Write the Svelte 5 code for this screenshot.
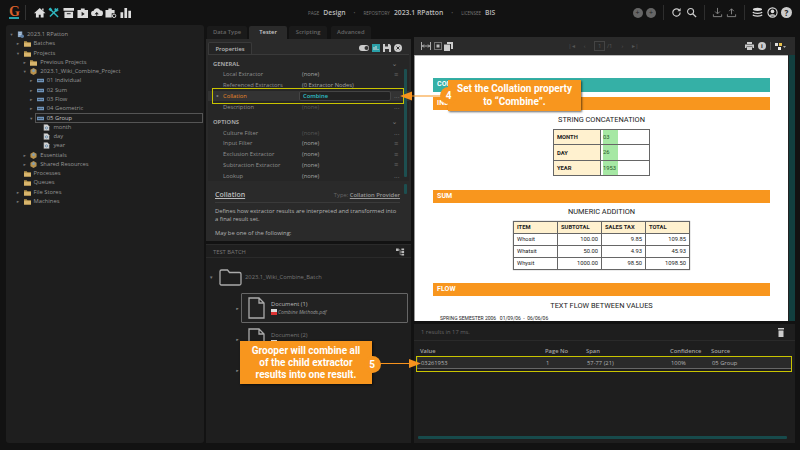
<script>
  const tree = [
    { l: 0, a: 'd', i: 'db', t: '2023.1 RPatton' },
    { l: 1, a: 'r', i: 'folder', t: 'Batches' },
    { l: 1, a: 'd', i: 'folder', t: 'Projects' },
    { l: 2, a: 'r', i: 'folder', t: 'Previous Projects' },
    { l: 2, a: 'd', i: 'proj', t: '2023.1_Wiki_Combine_Project' },
    { l: 3, a: 'r', i: 'ext', t: '01 Individual' },
    { l: 3, a: 'r', i: 'ext', t: '02 Sum' },
    { l: 3, a: 'r', i: 'ext', t: '03 Flow' },
    { l: 3, a: 'r', i: 'ext', t: '04 Geometric' },
    { l: 3, a: 'd', i: 'ext', t: '05 Group', sel: true },
    { l: 4, a: '', i: 'doc', t: 'month' },
    { l: 4, a: '', i: 'doc', t: 'day' },
    { l: 4, a: '', i: 'doc', t: 'year' },
    { l: 2, a: 'r', i: 'proj', t: 'Essentials' },
    { l: 2, a: 'r', i: 'proj', t: 'Shared Resources' },
    { l: 1, a: '', i: 'folder', t: 'Processes' },
    { l: 1, a: '', i: 'folder', t: 'Queues' },
    { l: 1, a: 'r', i: 'folder', t: 'File Stores' },
    { l: 1, a: 'r', i: 'folder', t: 'Machines' }
  ];
  const general = [
    { k: 'Local Extractor', v: '(none)', m: 'list' },
    { k: 'Referenced Extractors', v: '(0 Extractor Nodes)', m: '' },
    { k: 'Collation', v: 'Combine', m: 'dots', active: true },
    { k: 'Description', v: '(none)', m: 'dots', dim: true }
  ];
  const options = [
    { k: 'Culture Filter', v: '(none)', m: 'dots', dim: true },
    { k: 'Input Filter', v: '(none)', m: 'list' },
    { k: 'Exclusion Extractor', v: '(none)', m: 'list' },
    { k: 'Subtraction Extractor', v: '(none)', m: 'list' },
    { k: 'Lookup', v: '(none)', m: 'dots' }
  ];
  const sum = [
    ['Whosit', '100.00', '9.85', '109.85'],
    ['Whatsit', '50.00', '4.93', '45.93'],
    ['Whysit', '1000.00', '98.50', '1098.50']
  ];
</script>

{#snippet treeIcon(kind)}
  {#if kind === 'folder'}
    <svg class="ti" viewBox="0 0 8 7"><path d="M0 1h3l1 1h4v5H0z" fill="#b8964f"/><path d="M0 3h8v4H0z" fill="#d9b66c"/></svg>
  {:else if kind === 'db'}
    <svg class="ti" viewBox="0 0 8 8"><path d="M1 .5h5v6.500H1z" fill="#8aa6c4"/><path d="M2 2h3M2 4h3" stroke="#dfe7ef" stroke-width=".6"/><circle cx="6" cy="6" r="2" fill="#5f7fa3"/></svg>
  {:else if kind === 'proj'}
    <svg class="ti" viewBox="0 0 8 8"><path d="M4 0l3.500 2v4L4 8 .5 6V2z" fill="#b8924e"/><circle cx="4" cy="3" r="1.500" fill="#7fa0b8"/></svg>
  {:else if kind === 'ext'}
    <svg class="ti" viewBox="0 0 8 6"><path d="M0 1h8v4H0z" fill="#6f93b8"/><path d="M1 3h6" stroke="#2a3644" stroke-dasharray="1 .5"/></svg>
  {:else}
    <svg class="ti" viewBox="0 0 7 8"><path d="M.5.5h4l2 2v5h-6z" fill="#d5d5d5" stroke="#8a8a8a" stroke-width=".5"/><circle cx="3.500" cy="4.500" r="1.300" fill="none" stroke="#5f87a8"/></svg>
  {/if}
{/snippet}

{#snippet bigDoc()}
  <svg class="bigdoc" viewBox="0 0 17 22"><path d="M1 1h10l5 5v15H1z M11 1v5h5" fill="none" stroke="#aaa" stroke-width="1.300"/></svg>
{/snippet}

{#snippet propRow(r)}
  <div class="prow" class:dim={r.dim} class:active={r.active}>
    <span class="pk">{r.k}</span>
    <span class="pv">{r.v}</span>
    <span class="pm">
      {#if r.m === 'list'}≡{:else if r.m === 'dots'}...{/if}
    </span>
  </div>
{/snippet}

<div class="app">
  <header class="top">
    <div class="left-h">
      <span class="logo">G</span>
      <span class="sep"></span>
      <svg class="hi" viewBox="0 0 12 12"><path d="M6 1L0 6.500h2V11h3V8h2v3h3V6.500h2zM8.500 1.500H10V4L8.500 3z" fill="#ddd"/></svg>
      <svg class="hi" viewBox="0 0 12 12"><path d="M1.500 1.500l9 9M10.500 1.500l-8.500 8.500" stroke="#2fb7c0" stroke-width="1.500" fill="none"/><path d="M7.500 1a2 2 0 0 0 .5 3.500l1 .5 2.500-1.500-1.500-.2-.5-1z M0.500 2.500l2-2 2 2-2 2z" fill="#2fb7c0"/></svg>
      <svg class="hi" viewBox="0 0 12 12"><path d="M.5 1h11v3H.5zM1.500 5h9v6.500h-9z" fill="#ddd"/><path d="M4 7h4" stroke="#222"/></svg>
      <svg class="hi" viewBox="0 0 12 12"><path d="M.5 3H4V1.500h4V3h3.500v8.500H.5z" fill="#ddd"/><path d="M4.800 5l3.200 2.200-3.200 2.200z" fill="#222"/></svg>
      <svg class="hi" viewBox="0 0 12 12"><path d="M3 9.500a2.800 2.800 0 0 1-.2-5.600 3.500 3.500 0 0 1 6.700-.4A3 3 0 0 1 9.500 9.500z" fill="#ddd"/><path d="M6 10V6M4.300 7.500L6 5.800l1.700 1.700" stroke="#222"/></svg>
      <svg class="hi" viewBox="0 0 12 12"><path d="M.5 3H3.500V1.500h3.500V3h3v3.500H7V11H.5z" fill="#ddd"/><circle cx="9.500" cy="9.200" r="1.800" fill="none" stroke="#ddd"/></svg>
      <svg class="hi" viewBox="0 0 12 12"><path d="M.5 5.500h2.800v6H.5zM4.600 1h2.800v10.500H4.600zM8.700 4h2.800v7.500H8.700z" fill="#ddd"/></svg>
    </div>
    <div class="crumbs">
      <small>PAGE</small><b>Design</b><i>•</i>
      <small>REPOSITORY</small><b>2023.1 RPatton</b><i>•</i>
      <small>LICENSEE</small><b>BIS</b>
    </div>
    <div class="right-h">
      <span class="dot d1">+</span><span class="dot">+</span>
      <span class="sep s2"></span>
      <svg class="hi2" viewBox="0 0 12 12"><path d="M10 6a4 4 0 1 1-1.200-2.900" fill="none" stroke="#ccc" stroke-width="1.300"/><path d="M10.500 1v3.500H7z" fill="#ccc"/></svg>
      <svg class="hi2" viewBox="0 0 12 12"><circle cx="5" cy="5" r="3.300" fill="none" stroke="#ccc" stroke-width="1.200"/><path d="M7.500 7.500l3.500 3.500" stroke="#ccc" stroke-width="1.500"/></svg>
      <span class="sep s2"></span>
      <svg class="hi2" viewBox="0 0 12 12"><path d="M6 1v6M3.500 5L6 7.500 8.500 5M1.500 8v2.500h9V8" fill="none" stroke="#888" stroke-width="1"/></svg>
      <svg class="hi2" viewBox="0 0 12 12"><path d="M6 8V2M3.500 4.500L6 2l2.500 2.500M1.500 8v2.500h9V8" fill="none" stroke="#888" stroke-width="1"/></svg>
      <span class="sep s2"></span>
      <svg class="hi2" viewBox="0 0 12 12"><ellipse cx="6" cy="2.500" rx="5" ry="1.800" fill="#ddd"/><path d="M1 5.500c1 2 9 2 10 0M1 8.500c1 2 9 2 10 0" stroke="#ddd" stroke-width="1.300" fill="none"/></svg>
      <svg class="hi2" viewBox="0 0 12 12"><circle cx="6" cy="6" r="5" fill="none" stroke="#ddd" stroke-width="1.200"/><circle cx="6" cy="4.800" r="2" fill="#ddd"/><path d="M2.500 9.500a4 3 0 0 1 7 0z" fill="#ddd"/></svg>
      <span class="help">?</span>
    </div>
  </header>

  <main class="body">
    <section class="treepanel">
      {#each tree as n}
        <div class="trow" class:sel={n.sel} style="padding-left:{3 + n.l * 6.600}px">
          <span class="arr">{n.a === 'd' ? '▼' : n.a === 'r' ? '►' : ''}</span>
          {@render treeIcon(n.i)}
          <span>{n.t}</span>
        </div>
      {/each}
    </section>

    <section class="midcol">
      <nav class="tabs">
        <span>Data Type</span><span class="on">Tester</span><span>Scripting</span><span class="adv">Advanced</span>
      </nav>
      <div class="props">
        <div class="props-head">
          <span class="ptab">Properties</span>
          <span class="picons">
            <svg viewBox="0 0 10 6" width="10" height="6"><rect width="10" height="6" rx="3" fill="#ccc"/><circle cx="7.500" cy="3" r="2" fill="#333"/></svg>
            <svg viewBox="0 0 8 8" width="8" height="8"><rect width="8" height="8" fill="#2aa0a8"/><path d="M2 3v3M4 2v4M6 5v1" stroke="#ddd"/></svg>
            <svg viewBox="0 0 8 8" width="8" height="8"><path d="M0 0h6.500L8 1.500V8H0z" fill="#ccc"/><path d="M2 0h3v2.500H2zM2 5h4v3H2z" fill="#333"/></svg>
            <svg viewBox="0 0 8 8" width="8" height="8"><circle cx="4" cy="4" r="4" fill="#ccc"/><path d="M2.500 2.500l3 3M5.500 2.500l-3 3" stroke="#333"/></svg>
          </span>
        </div>
        <div class="grid-wrap">
          <div class="ghead"><span>GENERAL</span><em>⌄</em></div>
          {#each general as r}{@render propRow(r)}{/each}
          <div class="ghead g2"><span>OPTIONS</span><em>⌄</em></div>
          {#each options as r}{@render propRow(r)}{/each}
          <span class="pscroll"></span>
        </div>
        <div class="help-box">
          <div class="hb-title"><b>Collation</b><span>Type: <u>Collation Provider</u></span></div>
          <p>Defines how extractor results are interpreted and transformed into a final result set.</p>
          <p>May be one of the following:</p>
          <span class="pscroll s3"></span>
        </div>
      </div>
      <div class="batch">
        <div class="batch-head"><span>TEST BATCH</span>
          <svg viewBox="0 0 10 8" width="9" height="8"><path d="M0 0h3v3H0zM6 0h3v2H6zM6 3h3v2H6zM6 6h3v2H6z" fill="#bbb"/><path d="M3 1.500h1.500v5.500H6M4.500 4H6" stroke="#bbb" fill="none" stroke-width=".6"/></svg>
        </div>
        <div class="b-root">
          <span class="arr2">▼</span>
          <svg class="bigfolder" viewBox="0 0 23 18"><path d="M1 3.500a1.500 1.500 0 0 1 1.500-1.500h6l2 2.500h10a1.500 1.500 0 0 1 1.500 1.500v9.500a1.500 1.500 0 0 1-1.500 1.500h-18A1.500 1.500 0 0 1 1 15z" fill="none" stroke="#aaa" stroke-width="1.300"/></svg>
          <span class="b-name">2023.1_Wiki_Combine_Batch</span>
        </div>
        <div class="b-doc boxed">
          <span class="arr3">►</span>
          <div class="docbox">
            {@render bigDoc()}
            <div class="dt"><span>Document (1)</span><small><i class="pdf"></i>Combine Methods.pdf</small></div>
          </div>
        </div>
        <div class="b-doc">
          <span class="arr3">►</span>
          <div class="docbox plain">
            {@render bigDoc()}
            <div class="dt dim"><span>Document (2)</span><small><i class="pdf"></i>Combine Methods.pdf</small></div>
          </div>
        </div>
        <div class="b-doc">
          <span class="arr3">►</span>
          <div class="docbox plain">
            {@render bigDoc()}
            <div class="dt dim"><span>Document (3)</span><small><i class="pdf"></i>Combine Methods.pdf</small></div>
          </div>
        </div>
      </div>
    </section>

    <section class="rightcol">
      <div class="viewer">
        <div class="vbar">
          <span class="vl">
            <svg viewBox="0 0 10 8" width="10" height="8"><path d="M.5 0v8M9.500 0v8M1 4h8M3 2.500L1.500 4 3 5.500M7 2.500L8.500 4 7 5.500" stroke="#ccc" fill="none" stroke-width=".8"/></svg>
            <svg viewBox="0 0 8 8" width="8" height="8"><path d="M.5.500h7v7h-7z" fill="none" stroke="#bbb" stroke-dasharray="1 1"/><path d="M2.500 2.500h3v3h-3z" fill="#bbb"/></svg>
            <svg viewBox="0 0 9 9" width="9" height="9"><path d="M3 0h6v7H7V2H3z" fill="#ccc"/><path d="M0 2.500h6V9H0z" fill="#ccc"/></svg>
          </span>
          <span class="vc"><span>|◂</span><span>‹</span><b>1</b><span class="of">/1</span><span>›</span><span>▸|</span></span>
          <span class="vr">
            <svg viewBox="0 0 9 8" width="9" height="8"><path d="M2 0h5v2H2zM0 2.500h9V6H7.500V4.500h-6V6H0zM2 5h5v3H2z" fill="#ccc"/></svg>
            <span class="info">i</span>
            <span class="vsep"></span>
            <svg viewBox="0 0 11 7" width="11" height="7"><path d="M0 0h3v3H0z" fill="#ddd"/><path d="M4 0h3v3H4z" fill="#e8c04a"/><path d="M3 4h3v3H3z" fill="#eee"/><path d="M8 3l1.500 2L11 3z" fill="#aaa"/></svg>
          </span>
        </div>
        <div class="viewport">
          <div class="page">
            <div class="bar teal">COMBINE</div>
            <div class="bar org">INDIVIDUAL</div>
            <h4>STRING CONCATENATION</h4>
            <table class="t1"><tbody>
              <tr><th>MONTH</th><td><mark>03</mark></td></tr>
              <tr><th>DAY</th><td><mark>26</mark></td></tr>
              <tr><th>YEAR</th><td><mark>1953</mark></td></tr>
            </tbody></table>
            <div class="bar org b2">SUM</div>
            <h4 class="h-sum">NUMERIC ADDITION</h4>
            <table class="t2">
              <thead><tr><th>ITEM</th><th>SUBTOTAL</th><th>SALES TAX</th><th>TOTAL</th></tr></thead>
              <tbody>
                {#each sum as r}
                  <tr><td class="lft">{r[0]}</td><td>{r[1]}</td><td>{r[2]}</td><td>{r[3]}</td></tr>
                {/each}
              </tbody>
            </table>
            <div class="bar org b3">FLOW</div>
            <h4>TEXT FLOW BETWEEN VALUES</h4>
            <div class="tiny">SPRING SEMESTER 2006 &nbsp; 01/09/06 &nbsp;-&nbsp; 06/06/06</div>
          </div>
          <span class="vscroll"></span>
        </div>
      </div>
      <div class="results">
        <div class="r-head"><span>1 results in 17 ms.</span>
          <svg viewBox="0 0 6 9" width="6" height="9"><path d="M0 0h6v1.500H0zM.5 2.500h5V9h-5z" fill="#ccc"/></svg>
        </div>
        <div class="r-cols r-th"><span>Value</span><span>Page No</span><span>Span</span><span>Confidence</span><span>Source</span></div>
        <div class="r-cols r-row"><span>03261953</span><span>1</span><span>57-77 (21)</span><span>100%</span><span>05 Group</span></div>
        <span class="hscroll"></span>
      </div>
    </section>
  </main>

  <div class="hl h1"></div>
  <div class="hl h2"></div>

  <svg class="lead" width="800" height="450" viewBox="0 0 800 450">
    <path d="M408 96H445" stroke="#f7931e" stroke-width="1.200"/>
    <path d="M400 96l12-4.500v9z" fill="#f7931e"/>
    <path d="M372 363.500H415" stroke="#f7931e" stroke-width="1.200"/>
    <path d="M421 363.500l-12-4.500v9z" fill="#f7931e"/>
  </svg>

  <div class="callout c4"><span class="num">4</span>Set the Collation property<br />to “Combine”.</div>
  <div class="callout c5"><span class="num">5</span>Grooper will combine all<br />of the child extractor<br />results into one result.</div>
</div>

<style>
  :global(body) { margin: 0; background: #111; }
  .app {
    position: relative; width: 800px; height: 450px; overflow: hidden;
    background: #121212; color: #aaa;
    font-family: "Open Sans", "Noto Sans", sans-serif; font-size: 5.800px;
    display: flex; flex-direction: column;
  }
  .top { height: 25px; display: flex; align-items: center; padding: 0 8px; box-sizing: border-box; }
  .left-h { display: flex; align-items: center; width: 200px; flex: none; }
  .logo { font: 700 14px "Liberation Serif", serif; color: #d9602a; width: 10px; margin-left: 1px; border-bottom: 2px solid #2aa0a8; line-height: 11px; text-align: center; }
  .sep { width: 1px; height: 15px; background: #333; margin: 0 8px 0 6px; flex: none; }
  .hi { width: 11.500px; height: 11.500px; margin-right: 2.800px; flex: none; }
  .crumbs { flex: 1; display: flex; align-items: center; padding-left: 100px; color: #bbb; white-space: nowrap; }
  .crumbs small { font-size: 4.500px; color: #777; margin-right: 4px; }
  .crumbs b { font-size: 6.800px; font-weight: 600; color: #bbb; }
  .crumbs i { color: #555; margin: 0 8px; font-style: normal; font-size: 5px; }
  .right-h { display: flex; align-items: center; gap: 3.500px; }
  .dot { width: 10px; height: 10px; border-radius: 50%; background: #666; color: #222; text-align: center; line-height: 10px; font-size: 7px; }
  .s2 { margin: 0 3.500px; background: #2e2e2e; }
  .hi2 { width: 11px; height: 11px; }
  .help { width: 11px; height: 11px; border-radius: 50%; background: #ccc; color: #222; text-align: center; line-height: 11px; font-size: 8px; font-weight: 700; }

  .body { flex: 1; display: flex; padding: 0 5px 7px 6px; gap: 2px; min-height: 0; }
  .treepanel { width: 198px; flex: none; background: #1e1e1e; border-radius: 3px; padding-top: 5px; box-sizing: border-box; color: #969696; }
  .trow { height: 9.280px; display: flex; align-items: center; gap: 3px; white-space: nowrap; line-height: 9px; box-sizing: border-box; position: relative; }
  .trow.sel { color: #c4c4c4; }
  .trow.sel::after { content: ''; position: absolute; left: 29px; right: 1px; top: 0; bottom: 0; border: 1px solid #555; }
  .arr { width: 5px; font-size: 4px; color: #777; text-align: center; flex: none; }
  .ti { width: 7px; height: 7px; flex: none; }

  .midcol { width: 205px; flex: none; display: flex; flex-direction: column; gap: 3px; }
  .tabs { height: 13px; display: flex; align-items: stretch; gap: 2px; padding-left: 1px; margin-top: 1px; margin-bottom: -3px; font-weight: 600; color: #666; }
  .tabs span { padding: 2px 6px 0; background: #1a1a1a; border-radius: 2px 2px 0 0; line-height: 9px; min-width: 26px; text-align: center; }
  .tabs .on { background: #2a2a2a; color: #ccc; width: 20px; }
  .tabs .adv { margin-left: 2px; }
  .props { height: 202px; flex: none; background: #2a2a2a; display: flex; flex-direction: column; padding: 3px 2px 0; box-sizing: border-box; }
  .props-head { height: 12px; display: flex; justify-content: space-between; align-items: flex-end; border-bottom: 1px solid #3a3a3a; flex: none; }
  .ptab { background: #242424; padding: 0 6.500px; line-height: 12px; font-weight: 600; color: #bbb; border: 1px solid #3a3a3a; border-bottom: none; border-radius: 2px 2px 0 0; height: 11px; }
  .picons { display: flex; gap: 3px; align-items: center; margin: 0 7px 2px 0; }
  .grid-wrap { position: relative; background: #262626; padding-bottom: 3px; flex: none; padding-top: 3px; height: 126px; box-sizing: border-box; }
  .ghead { display: flex; justify-content: space-between; font-weight: 700; color: #a4a4a4; padding: 0 12px 0 5px; height: 11px; align-items: center; }
  .ghead em { font-style: normal; color: #777; }
  .g2 { margin-top: 4px; }
  .prow { height: 10.800px; display: flex; align-items: center; color: #909090; position: relative; }
  .pk { width: 76px; margin-left: 15px; flex: none; }
  .pv { width: 92px; flex: none; color: #a4a4a4; padding-left: 3px; box-sizing: border-box; }
  .pm { color: #666; font-size: 7px; line-height: 7px; margin-left: 3px; }
  .dim .pv { color: #555; }
  .active { background: #333; }
  .active .pk { color: #e8882a; }
  .active .pv { color: #2fc0c8; font-weight: 600; border: 1px solid #444; border-radius: 2px; height: 10px; line-height: 8px; background: #222; }
  .active::before { content: '►'; position: absolute; left: 8px; font-size: 3.500px; color: #999; }
  .pscroll { position: absolute; right: 2px; top: 14px; width: 3px; height: 108px; background: #1d4f50; border-radius: 1px; }
  .help-box { position: relative; padding: 5px 9px 0 7px; margin-top: 1px; color: #b4b4b4; background: #2a2a2a; flex: 1; overflow: hidden; }
  .hb-title { display: flex; justify-content: space-between; border-bottom: 1px solid #3a3a3a; padding: 3px 0 3px; align-items: baseline; }
  .hb-title b { font-size: 7px; color: #bbb; text-decoration: underline; font-weight: 600; }
  .hb-title span { color: #666; }
  .hb-title u { color: #999; font-weight: 600; }
  .help-box p { margin: 4px 0 6px; line-height: 8px; }
  .s3 { top: 2px; height: 10px; }
  .batch { flex: 1; background: #1e1e1e; min-height: 0; position: relative; overflow: hidden; }
  .batch-head { height: 14px; box-sizing: border-box; display: flex; justify-content: space-between; align-items: center; padding: 2px 6px 0 7px; color: #777; border-bottom: 1px solid #2a2a2a; border-top: 1px solid #2a2a2a; }
  .b-root { display: flex; align-items: center; height: 21px; margin-top: 8.500px; padding-left: 3px; color: #777; }
  .arr2 { font-size: 4.500px; width: 10px; }
  .bigfolder { width: 23px; height: 18px; margin-right: 3px; }
  .b-doc { display: flex; align-items: center; height: 30px; padding-left: 28px; margin-top: 1px; }
  .b-doc.boxed { margin-top: 5.500px; }
  .arr3 { font-size: 4px; width: 7px; color: #888; text-align: center; }
  .docbox { width: 167px; height: 30px; display: flex; align-items: center; border: 1px solid #666; background: #222; box-sizing: border-box; padding-left: 6px; gap: 6px; border-radius: 1px; }
  .docbox.plain { border-color: transparent; background: none; }
  .bigdoc { width: 17px; height: 22px; flex: none; }
  .dt { display: flex; flex-direction: column; color: #bbb; gap: 1px; line-height: 7px; }
  .dt small { font-size: 5px; font-style: italic; display: flex; align-items: center; gap: 1px; color: #999; }
  .dt.dim { color: #777; }
  .pdf { width: 6px; height: 6px; background: #ddd; border-bottom: 3px solid #d33; box-sizing: border-box; }

  .rightcol { flex: 1; display: flex; flex-direction: column; gap: 3px; margin-left: 1px; margin-top: 12px; min-width: 0; }
  .viewer { height: 284px; flex: none; display: flex; flex-direction: column; background: #1b1b1b; }
  .vbar { height: 18px; background: #2a2a2a; display: flex; align-items: center; justify-content: space-between; padding: 0 9px 0 7px; flex: none; }
  .vl, .vr { display: flex; gap: 2.500px; align-items: center; width: 44px; }
  .vr { justify-content: flex-end; gap: 4px; }
  .vc { color: #555; display: flex; align-items: center; gap: 9px; font-size: 6px; }
  .vc b { border: 1px solid #444; padding: 0 2.500px; font-weight: 400; margin-right: -7px; }
  .info { width: 8px; height: 8px; border-radius: 50%; background: #ccc; color: #222; text-align: center; line-height: 8px; font-weight: 700; }
  .vsep { width: 1px; height: 8px; background: #555; }
  .viewport { flex: 1; display: flex; padding-left: 1px; min-height: 0; background: #999; }
  .page { flex: 1; background: #fff; padding: 22px 18px 0; overflow: hidden; color: #222; text-align: center; font-family: Roboto, "Liberation Sans", sans-serif; border-top: 1px solid #bbb; box-sizing: border-box; }
  .vscroll { width: 6px; background: #123f3f; border-left: 1px solid #222; flex: none; }
  .bar { height: 13px; line-height: 13px; color: #fff; font-weight: 700; font-size: 7px; text-align: left; padding-left: 4px; letter-spacing: .1px; }
  .teal { background: #35b0a6; height: 14px; margin-bottom: 5px; }
  .org { background: #f8961e; }
  .b2 { margin-top: 14px; }
  .b3 { margin-top: 13px; }
  h4 { margin: 5px 0 5px; font-size: 7.400px; font-weight: 400; line-height: 9px; color: #222; }
  .h-sum { margin-top: 4px; }
  table { border-collapse: collapse; margin: 0 auto; font-size: 5.800px; }
  .t1 { width: 97px; table-layout: fixed; }
  .t1 th, .t1 td { border: 1px solid #666; height: 14.400px; padding: 0 3px; text-align: left; }
  .t1 th { background: #fff1cf; width: 40px; font-weight: 700; }
  .t1 td { padding: 0 2px; }
  mark { background: #a6e8a4; color: #2a5a2a; display: block; width: 15px; height: 14.400px; line-height: 14.400px; }
  .t2 { width: 177px; table-layout: fixed; margin-top: 5px; box-shadow: 0 0 1px #888; }
  .t2 th, .t2 td { border: 1px solid #666; padding: 0 3px; height: 11px; line-height: 9px; text-align: right; }
  .t2 th { background: #fff1cf; text-align: left; font-weight: 700; }
  .t2 .lft { text-align: left; }
  .tiny { text-align: left; font-size: 5px; margin: 4px 0 0 7px; white-space: nowrap; line-height: 6px; }

  .results { flex: 1; background: #1e1e1e; position: relative; min-height: 0; color: #a4a4a4; }
  .r-head { height: 17px; display: flex; justify-content: space-between; align-items: center; padding: 0 11px 0 7px; border-bottom: 1px solid #2a2a2a; color: #666; box-sizing: border-box; }
  .r-cols { display: grid; grid-template-columns: 125px 41px 84px 41px 1fr; padding-left: 6px; align-items: center; }
  .r-th { height: 15px; font-weight: 600; padding-top: 4px; box-sizing: border-box; }
  .r-row { height: 13px; background: #2a2a2a; margin: 0 3px; padding-left: 3px; border: 1px solid #3a3a3a; border-bottom-color: #666; box-sizing: border-box; color: #b4b4b4; }
  .hscroll { position: absolute; left: 4px; right: 8px; bottom: 4px; height: 3px; background: #174a4b; border-radius: 1px; }

  .hl { position: absolute; border: 1px solid #c9c400; box-sizing: border-box; pointer-events: none; }
  .h1 { left: 212px; top: 88px; width: 192px; height: 16px; }
  .h2 { left: 416px; top: 356px; width: 376px; height: 16px; }
  .lead { position: absolute; left: 0; top: 0; pointer-events: none; }

  .callout {
    position: absolute; background: #f8961e; color: #fff; font-family: Roboto, "Liberation Sans", sans-serif;
    font-weight: 700; font-size: 10px; text-align: center; box-sizing: border-box;
    box-shadow: 1px 1px 2px rgba(0,0,0,.6);
  }
  .c4 { left: 448px; top: 80px; width: 133px; height: 31px; padding-top: 3px; line-height: 12.500px; }
  .c5 { left: 240px; top: 341px; width: 132px; height: 43px; padding-top: 3.500px; line-height: 12px; }
  .num { position: absolute; width: 17px; height: 17px; border-radius: 50%; background: #f8961e; line-height: 17px; font-size: 10px; }
  .c4 .num { left: -8px; top: 7px; text-align: center; }
  .c5 .num { right: -8.500px; top: 14.500px; text-align: center; }
</style>
